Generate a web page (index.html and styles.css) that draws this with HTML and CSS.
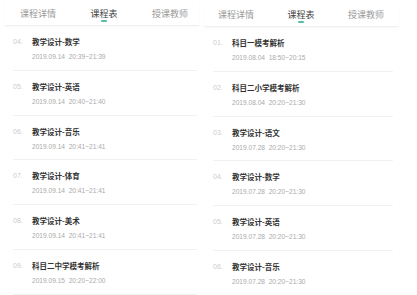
FILE: index.html
```html
<!DOCTYPE html>
<html lang="zh-CN">
<head>
    <meta charset="UTF-8">
    <meta name="viewport" content="width=device-width, initial-scale=1.0">
    <title>课程表</title>
    <link rel="stylesheet" href="styles.css">
</head>
<body>
    <div class="screen">
        <div class="tabs">
            <div class="tab">课程详情</div>
            <div class="tab active">课程表</div>
            <div class="tab">授课教师</div>
        </div>
        <ul class="lessons">
            <li><span class="num">04.</span><div><p class="title">教学设计-数学</p><p class="time">2019.09.14&nbsp;&nbsp;20:39~21:39</p></div></li>
            <li><span class="num">05.</span><div><p class="title">教学设计-英语</p><p class="time">2019.09.14&nbsp;&nbsp;20:40~21:40</p></div></li>
            <li><span class="num">06.</span><div><p class="title">教学设计-音乐</p><p class="time">2019.09.14&nbsp;&nbsp;20:41~21:41</p></div></li>
            <li><span class="num">07.</span><div><p class="title">教学设计-体育</p><p class="time">2019.09.14&nbsp;&nbsp;20:41~21:41</p></div></li>
            <li><span class="num">08.</span><div><p class="title">教学设计-美术</p><p class="time">2019.09.14&nbsp;&nbsp;20:41~21:41</p></div></li>
            <li><span class="num">09.</span><div><p class="title">科目二中学模考解析</p><p class="time">2019.09.15&nbsp;&nbsp;20:20~22:00</p></div></li>
        </ul>
    </div>
    <div class="screen second">
        <div class="tabs">
            <div class="tab">课程详情</div>
            <div class="tab active">课程表</div>
            <div class="tab">授课教师</div>
        </div>
        <ul class="lessons">
            <li><span class="num">01.</span><div><p class="title">科目一模考解析</p><p class="time">2019.08.04&nbsp;&nbsp;18:50~20:15</p></div></li>
            <li><span class="num">02.</span><div><p class="title">科目二小学模考解析</p><p class="time">2019.08.04&nbsp;&nbsp;20:20~21:30</p></div></li>
            <li><span class="num">03.</span><div><p class="title">教学设计-语文</p><p class="time">2019.07.28&nbsp;&nbsp;20:20~21:30</p></div></li>
            <li><span class="num">04.</span><div><p class="title">教学设计-数学</p><p class="time">2019.07.28&nbsp;&nbsp;20:20~21:30</p></div></li>
            <li><span class="num">05.</span><div><p class="title">教学设计-英语</p><p class="time">2019.07.28&nbsp;&nbsp;20:20~21:30</p></div></li>
            <li><span class="num">06.</span><div><p class="title">教学设计-音乐</p><p class="time">2019.07.28&nbsp;&nbsp;20:20~21:30</p></div></li>
        </ul>
    </div>
</body>
</html>
```

FILE: styles.css
```css
body {
    margin: 0;
    padding-left: 5px;
    width: 417px;
    height: 295px;
    overflow: hidden;
    display: flex;
    gap: 6px;
    background: #fff;
    font-family: "Noto Sans CJK SC", "Noto Sans", sans-serif;
}
.screen { width: 194px; flex: none; }
.screen.second { padding-top: 1px; }

.tabs {
    display: flex;
    height: 25px;
    border-bottom: 1px solid #f0f0f0;
    box-shadow: 0 1px 2px rgba(0, 0, 0, 0.03);
}
.second .tabs { margin-left: -1.5px; }
.tab {
    width: 66px;
    flex: none;
    text-align: center;
    font-size: 9px;
    line-height: 11px;
    padding-top: 8px;
    color: #999;
    position: relative;
}
.second .tab { width: 65px; }
.tab.active { color: #444; }
.tab.active::after {
    content: "";
    position: absolute;
    left: 50%;
    top: 20px;
    width: 6px;
    height: 2px;
    margin-left: -3px;
    border-radius: 1px;
    background: #52bfa6;
}

.lessons { list-style: none; margin: 0; padding: 0 2px 0 8px; }
.second .lessons { padding-right: 6px; }
.lessons li {
    display: flex;
    padding: 11px 0 8.8px;
    border-bottom: 1px solid #f2f2f2;
}
.num {
    width: 19px;
    flex: none;
    font-size: 7px;
    line-height: 9px;
    color: #ccc;
    font-family: "Liberation Sans", sans-serif;
}
.title {
    margin: 0;
    font-size: 7.5px;
    line-height: 9px;
    font-weight: bold;
    color: #333;
}
.time {
    margin: 6px 0 0;
    font-size: 6.6px;
    line-height: 9px;
    color: #aaa;
    font-family: "Liberation Sans", sans-serif;
}
```
